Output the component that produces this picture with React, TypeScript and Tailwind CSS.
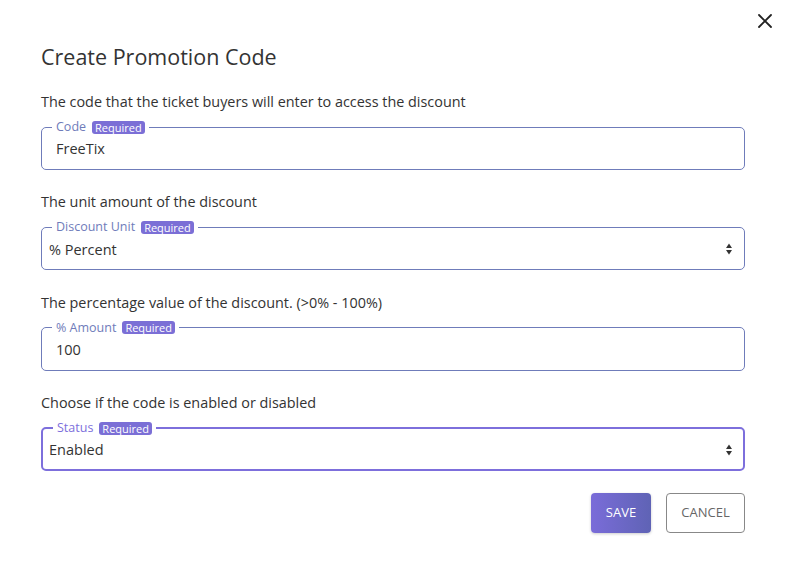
import React from "react";

function Arrows() {
  return (
    <svg width="8" height="14" viewBox="0 0 8 14" className="absolute right-[4px] top-1/2 -translate-y-1/2">
      <path d="M4 1.5 L7 6 H1 Z" fill="#333" />
      <path d="M4 12.5 L7 8 H1 Z" fill="#333" />
    </svg>
  );
}

function Field({
  label,
  value,
  select,
  focused,
}: {
  label: string;
  value: string;
  select?: boolean;
  focused?: boolean;
}) {
  return (
    <fieldset
      className={
        "relative rounded-[5px] px-[7px] " +
        (focused ? "border-2 border-[#7d6fdc] pb-[4px]" : "border border-[#6f7cba] pb-[5px]")
      }
    >
      <legend className="ml-[3px] px-[4px] flex items-center h-[14px]">
        <span className={"text-[12.5px] leading-[14px] " + (focused ? "text-[#7d6fdc]" : "text-[#6f7cba]")}>
          {label}
        </span>
        <span className="ml-[6px] rounded-[3px] bg-[#7b6fd6] px-[3px] text-[11px] leading-[13px] text-white">
          Required
        </span>
      </legend>
      <div
        className={
          "relative h-[30px] flex items-center text-[14.5px] text-[#333] " +
          (focused ? "-ml-[1px] -mr-[1px]" : "") +
          (select ? "" : " pl-[7px]")
        }
      >
        {value}
        {select && <Arrows />}
      </div>
    </fieldset>
  );
}

export default function App() {
  return (
    <div
      className="relative w-[786px] h-[561px] bg-white"
      style={{ fontFamily: '"Open Sans", "Noto Sans", sans-serif' }}
    >
      <button className="absolute right-[13px] top-[13px] w-[16px] h-[16px] flex items-center justify-center">
        <svg width="14" height="14" viewBox="0 0 14 14">
          <path d="M1 1 L13 13 M13 1 L1 13" stroke="#222" strokeWidth="1.8" strokeLinecap="round" />
        </svg>
      </button>
      <div className="pl-[41px] pt-[43px] w-[745px]">
        <h1 className="text-[21.5px] leading-[28px] text-[#333] font-normal">Create Promotion Code</h1>
        <div className="mt-[21px] flex flex-col gap-[22.4px]">
          <div className="flex flex-col gap-[8px]">
            <p className="text-[14.4px] leading-[20px] text-[#333]">
              The code that the ticket buyers will enter to access the discount
            </p>
            <Field label="Code" value="FreeTix" />
          </div>
          <div className="flex flex-col gap-[8px]">
            <p className="text-[14.4px] leading-[20px] text-[#333]">The unit amount of the discount</p>
            <Field label="Discount Unit" value="% Percent" select />
          </div>
          <div className="flex flex-col gap-[8px]">
            <p className="text-[14.4px] leading-[20px] text-[#333]">
              The percentage value of the discount. (&gt;0% - 100%)
            </p>
            <Field label="% Amount" value="100" />
          </div>
          <div className="flex flex-col gap-[8px]">
            <p className="text-[14.4px] leading-[20px] text-[#333]">Choose if the code is enabled or disabled</p>
            <Field label="Status" value="Enabled" select focused />
          </div>
        </div>
        <div className="mt-[22px] flex justify-end gap-[15px]">
          <button className="h-[40px] w-[60px] rounded-[4px] bg-gradient-to-r from-[#7a6cd9] to-[#5f63b5] text-white text-[13px] shadow-[0_1px_3px_rgba(0,0,0,0.2)]">
            SAVE
          </button>
          <button className="h-[40px] w-[79px] rounded-[4px] border border-[#888] text-[#666] text-[13px]">
            CANCEL
          </button>
        </div>
      </div>
    </div>
  );
}
